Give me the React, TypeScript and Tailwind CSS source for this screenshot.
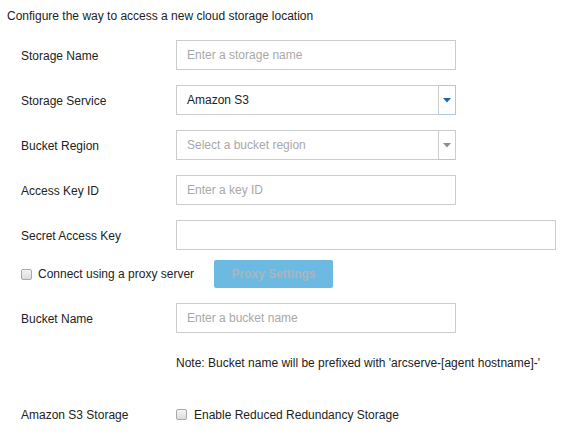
import React from 'react';

const Label: React.FC<{ children: React.ReactNode }> = ({ children }) => (
  <div className="w-[155px] shrink-0 pt-[2px] text-[12px] leading-[14px] text-[#222]">{children}</div>
);

const TextInput: React.FC<{ placeholder?: string; wide?: boolean }> = ({ placeholder, wide }) => (
  <input
    type="text"
    placeholder={placeholder}
    className={`${wide ? 'w-[380px]' : 'w-[280px]'} h-[30px] border border-[#cccccc] bg-white px-[10px] text-[12px] text-[#222] outline-none placeholder:text-[#a8a8a8]`}
  />
);

const Select: React.FC<{ value?: string; placeholder?: string; active?: boolean }> = ({ value, placeholder, active }) => (
  <div className="flex h-[30px] w-[280px]">
    <div className="flex flex-1 items-center border border-r-0 border-[#cccccc] bg-white px-[10px] text-[12px]">
      {value ? <span className="text-[#222]">{value}</span> : <span className="text-[#a8a8a8]">{placeholder}</span>}
    </div>
    <div
      className={`flex w-[18px] items-center justify-center border bg-white ${
        active ? 'border-[#a9c9ea] border-l-[#cccccc]' : 'border-[#cccccc] border-b-[#a9c9ea]'
      }`}
    >
      <svg width="8" height="5" viewBox="0 0 8 5">
        <path d="M0 0 H8 L4 4.5 Z" fill={active ? '#1d66ad' : '#8a8f94'} />
      </svg>
    </div>
  </div>
);

const Checkbox: React.FC = () => (
  <span className="inline-block h-[11px] w-[11px] shrink-0 rounded-[2px] border border-[#a9a9a9] bg-gradient-to-b from-[#f4f4f4] to-[#dcdcdc]" />
);

export default function App() {
  return (
    <div className="h-[440px] w-[566px] bg-white font-['Liberation_Sans',Arial,sans-serif] text-[12px] text-[#222]">
      <div className="px-[7px] pt-[9px] leading-[14px]">Configure the way to access a new cloud storage location</div>

      <div className="mt-[17px] flex flex-col pl-[21px]">
        <div className="flex items-center">
          <Label>Storage Name</Label>
          <TextInput placeholder="Enter a storage name" />
        </div>
        <div className="mt-[15px] flex items-center">
          <Label>Storage Service</Label>
          <Select value="Amazon S3" active />
        </div>
        <div className="mt-[15px] flex items-center">
          <Label>Bucket Region</Label>
          <Select placeholder="Select a bucket region" />
        </div>
        <div className="mt-[15px] flex items-center">
          <Label>Access Key ID</Label>
          <TextInput placeholder="Enter a key ID" />
        </div>
        <div className="mt-[15px] flex items-center">
          <Label>Secret Access Key</Label>
          <TextInput wide />
        </div>

        <div className="mt-[10px] flex items-center">
          <label className="flex w-[193px] items-center gap-[6px] leading-[14px]">
            <Checkbox />
            <span>Connect using a proxy server</span>
          </label>
          <button className="h-[28px] w-[119px] rounded-[2px] bg-[#6cbae1] text-[12px] font-bold text-[#a9b6bf]">
            Proxy Settings
          </button>
        </div>

        <div className="mt-[15px] flex items-center">
          <Label>Bucket Name</Label>
          <TextInput placeholder="Enter a bucket name" />
        </div>

        <div className="mt-[23px] pl-[155px] leading-[14px]">
          Note: Bucket name will be prefixed with 'arcserve-[agent hostname]-'
        </div>

        <div className="mt-[36px] flex items-center">
          <Label>Amazon S3 Storage</Label>
          <label className="flex items-center gap-[7px] pt-[1px] leading-[14px]">
            <Checkbox />
            <span>Enable Reduced Redundancy Storage</span>
          </label>
        </div>
      </div>
    </div>
  );
}
